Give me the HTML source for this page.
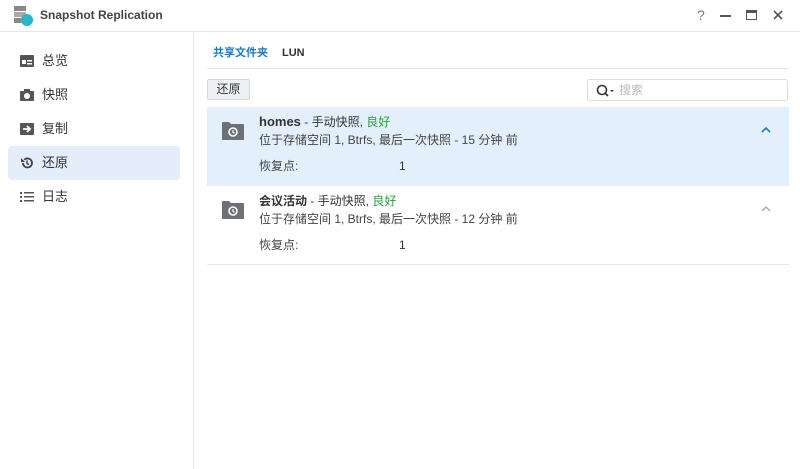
<!DOCTYPE html><html><head><meta charset="utf-8"><style>
*{margin:0;padding:0;box-sizing:border-box}
body{width:800px;height:469px;background:#fff;font-family:"Liberation Sans","Noto Sans CJK SC",sans-serif;color:#333;position:relative;overflow:hidden;font-size:12px;line-height:16px}
.abs{position:absolute}
.title{left:40px;top:7px;font-weight:bold;font-size:12px;color:#444}
.side a{position:absolute;left:8px;width:172px;height:34px;border-radius:4px;display:flex;align-items:center;padding-left:12px;font-size:13px;color:#333}
.side a.on{background:#e3eefa}
.side svg{margin-right:8px}
.row{position:absolute;left:207px;width:582px;height:79px;border-bottom:1px solid #e8e8e8}
.row .ic{position:absolute;left:15px;top:14px}
.row .t{position:absolute;left:52px;top:7px;font-size:12px}
.row .s{position:absolute;left:52px;top:25px;font-size:12px;color:#444}
.row .r{position:absolute;left:52px;top:51px;font-size:12px;color:#444}
.row .n{position:absolute;left:192px;top:51px;font-size:12px}
.g{color:#2e9e3e}
</style></head><body>
<svg class="abs" style="left:12px;top:5px" width="22" height="22"><rect x="2" y="1" width="12" height="5" fill="#888"/><rect x="2" y="7" width="12" height="5" fill="#aaa"/><rect x="2" y="13" width="12" height="5" fill="#888"/><circle cx="15" cy="15" r="6" fill="#27b6c9"/></svg>
<div class="abs title">Snapshot Replication</div>
<div class="abs" style="left:697px;top:7px;font-size:14px;color:#777">?</div>
<div class="abs" style="left:720px;top:15px;width:11px;height:2px;background:#555"></div>
<div class="abs" style="left:746px;top:10px;width:11px;height:10px;border:1.5px solid #555;border-top-width:3px"></div>
<svg class="abs" style="left:773px;top:10px" width="10" height="10"><path d="M1 1l8 8M9 1l-8 8" stroke="#555" stroke-width="1.6"/></svg>
<div class="abs" style="left:0;top:31px;width:800px;height:1px;background:#e6e6e6"></div>
<div class="abs" style="left:193px;top:32px;width:1px;height:437px;background:#e6e6e6"></div>
<div class="side">
<a style="top:44px"><svg width="14" height="12"><rect width="14" height="12" rx="1" fill="#555"/><rect x="2" y="5" width="4" height="4" fill="#fff"/><rect x="7" y="5" width="5" height="1.5" fill="#fff"/><rect x="7" y="8" width="5" height="1.5" fill="#fff"/></svg>总览</a>
<a style="top:78px"><svg width="14" height="12"><rect y="2" width="14" height="10" rx="1" fill="#555"/><rect x="4" width="6" height="3" fill="#555"/><circle cx="7" cy="7" r="3" fill="#fff"/></svg>快照</a>
<a style="top:112px"><svg width="14" height="12"><rect width="14" height="12" rx="1" fill="#555"/><path d="M3 6h6M7 3l3 3-3 3" stroke="#fff" stroke-width="1.8" fill="none"/></svg>复制</a>
<a class="on" style="top:146px"><svg width="14" height="14"><path d="M3 7a4.5 4.5 0 1 0 1.3-3.2" stroke="#444" stroke-width="1.8" fill="none"/><path d="M1 2v4h4" fill="#444"/><path d="M7 4.5v3l2 1" stroke="#444" stroke-width="1.5" fill="none"/></svg>还原</a>
<a style="top:180px"><svg width="14" height="12"><g fill="#555"><rect y="1" width="2" height="2"/><rect y="5" width="2" height="2"/><rect y="9" width="2" height="2"/><rect x="4" y="1" width="10" height="1.5"/><rect x="4" y="5" width="10" height="1.5"/><rect x="4" y="9" width="10" height="1.5"/></g></svg>日志</a>
</div>
<div class="abs" style="left:213px;top:45px;font-size:11px;font-weight:bold;color:#1a7bc4">共享文件夹</div>
<div class="abs" style="left:282px;top:45px;font-size:11px;font-weight:bold;color:#333">LUN</div>
<div class="abs" style="left:207px;top:68px;width:582px;height:1px;background:#e3e3e3"></div>
<div class="abs" style="left:207px;top:79px;width:43px;height:21px;background:#eef0f2;border:1px solid #d4d7da;border-radius:2px;font-size:12px;text-align:center;line-height:19px">还原</div>
<div class="abs" style="left:587px;top:79px;width:201px;height:22px;border:1px solid #dcdcdc;border-radius:3px"><svg class="abs" style="left:8px;top:4px" width="20" height="14"><circle cx="6" cy="6" r="4.5" stroke="#333" stroke-width="1.6" fill="none"/><path d="M9 9l3 3" stroke="#333" stroke-width="1.6"/><path d="M14 6h4l-2 2z" fill="#333"/></svg><span class="abs" style="left:31px;top:2px;color:#bbb;font-size:12px">搜索</span></div>
<div class="row" style="top:107px;background:#e3f0fc;border-bottom-color:#e3f0fc">
<svg class="ic" width="22" height="20"><path d="M0 2a1 1 0 0 1 1-1h6l2 2h12a1 1 0 0 1 1 1v15H0z" fill="#6d7175"/><circle cx="11" cy="11" r="4" stroke="#fff" stroke-width="1.6" fill="none"/><path d="M11 9v2.3l1.5 1" stroke="#fff" stroke-width="1.2" fill="none"/></svg>
<div class="t"><b style="font-size:13px">homes</b> - 手动快照, <span class="g">良好</span></div>
<div class="s">位于存储空间 1, Btrfs, 最后一次快照 - 15 分钟 前</div>
<div class="r">恢复点:</div><div class="n">1</div>
<svg class="abs" style="left:554px;top:20px" width="10" height="6"><path d="M1 5l4-4 4 4" stroke="#1a7bc4" stroke-width="1.6" fill="none"/></svg>
</div>
<div class="row" style="top:186px">
<svg class="ic" width="22" height="20"><path d="M0 2a1 1 0 0 1 1-1h6l2 2h12a1 1 0 0 1 1 1v15H0z" fill="#6d7175"/><circle cx="11" cy="11" r="4" stroke="#fff" stroke-width="1.6" fill="none"/><path d="M11 9v2.3l1.5 1" stroke="#fff" stroke-width="1.2" fill="none"/></svg>
<div class="t"><b>会议活动</b> - 手动快照, <span class="g">良好</span></div>
<div class="s">位于存储空间 1, Btrfs, 最后一次快照 - 12 分钟 前</div>
<div class="r">恢复点:</div><div class="n">1</div>
<svg class="abs" style="left:554px;top:20px" width="10" height="6"><path d="M1 5l4-4 4 4" stroke="#aaa" stroke-width="1.4" fill="none"/></svg>
</div>
</body></html>
